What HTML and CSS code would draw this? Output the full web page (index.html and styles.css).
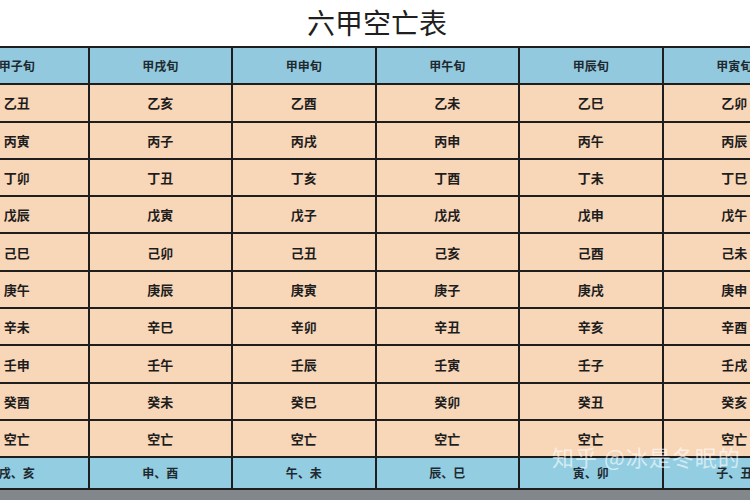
FILE: index.html
```html
<!DOCTYPE html>
<html lang="zh">
<head>
<meta charset="utf-8">
<title>六甲空亡表</title>
<link rel="stylesheet" href="styles.css">
</head>
<body>
<div class="page">
  <h1 class="title">六甲空亡表</h1>
  <table class="grid">
    <colgroup><col><col><col><col><col><col></colgroup>
    <tr class="head"><td>甲子旬</td><td>甲戌旬</td><td>甲申旬</td><td>甲午旬</td><td>甲辰旬</td><td>甲寅旬</td></tr>
    <tr><td>乙丑</td><td>乙亥</td><td>乙酉</td><td>乙未</td><td>乙巳</td><td>乙卯</td></tr>
    <tr><td>丙寅</td><td>丙子</td><td>丙戌</td><td>丙申</td><td>丙午</td><td>丙辰</td></tr>
    <tr><td>丁卯</td><td>丁丑</td><td>丁亥</td><td>丁酉</td><td>丁未</td><td>丁巳</td></tr>
    <tr><td>戊辰</td><td>戊寅</td><td>戊子</td><td>戊戌</td><td>戊申</td><td>戊午</td></tr>
    <tr><td>己巳</td><td>己卯</td><td>己丑</td><td>己亥</td><td>己酉</td><td>己未</td></tr>
    <tr><td>庚午</td><td>庚辰</td><td>庚寅</td><td>庚子</td><td>庚戌</td><td>庚申</td></tr>
    <tr><td>辛未</td><td>辛巳</td><td>辛卯</td><td>辛丑</td><td>辛亥</td><td>辛酉</td></tr>
    <tr><td>壬申</td><td>壬午</td><td>壬辰</td><td>壬寅</td><td>壬子</td><td>壬戌</td></tr>
    <tr><td>癸酉</td><td>癸未</td><td>癸巳</td><td>癸卯</td><td>癸丑</td><td>癸亥</td></tr>
    <tr><td>空亡</td><td>空亡</td><td>空亡</td><td>空亡</td><td>空亡</td><td>空亡</td></tr>
    <tr class="foot"><td>戌、亥</td><td>申、酉</td><td>午、未</td><td>辰、巳</td><td>寅、卯</td><td>子、丑</td></tr>
  </table>
  <div class="band"></div>
  <div class="watermark">知乎 @冰是冬眠的</div>
</div>
</body>
</html>
```

FILE: styles.css
```css
html, body {
  margin: 0;
  padding: 0;
  background: #ffffff;
}
body {
  width: 750px;
  height: 500px;
  overflow: hidden;
  font-family: "Noto Sans CJK SC", "Noto Sans", sans-serif;
}
.page {
  position: relative;
  width: 750px;
  height: 500px;
  overflow: hidden;
}
.title {
  margin: 0;
  height: 46px;
  line-height: 44px;
  text-align: center;
  font-size: 28px;
  font-weight: 400;
  color: #1f1f1f;
  padding-left: 4px;
}
.grid {
  margin-left: -56px;
  width: 862px;
  table-layout: fixed;
  border-collapse: collapse;
}
.grid col {
  width: 143.5px;
}
.grid td {
  height: 35.3px;
  padding: 0;
  border: 2px solid #1e1e1e;
  background: #f8d6b8;
  text-align: center;
  vertical-align: middle;
  font-size: 13px;
  font-weight: 700;
  color: #1d1d1d;
  line-height: 1;
}
.grid .head td {
  background: #93c9de;
  font-size: 12px;
  color: #1e2a30;
}
.grid .foot td {
  background: #92cde1;
  font-size: 12px;
  height: 30px;
  color: #1e2a30;
}
.band {
  height: 12px;
  background: #82878b;
}
.watermark {
  position: absolute;
  left: 552px;
  top: 440px;
  font-size: 22px;
  color: rgba(255, 255, 255, 0.6);
  white-space: nowrap;
  letter-spacing: 1px;
}
```
